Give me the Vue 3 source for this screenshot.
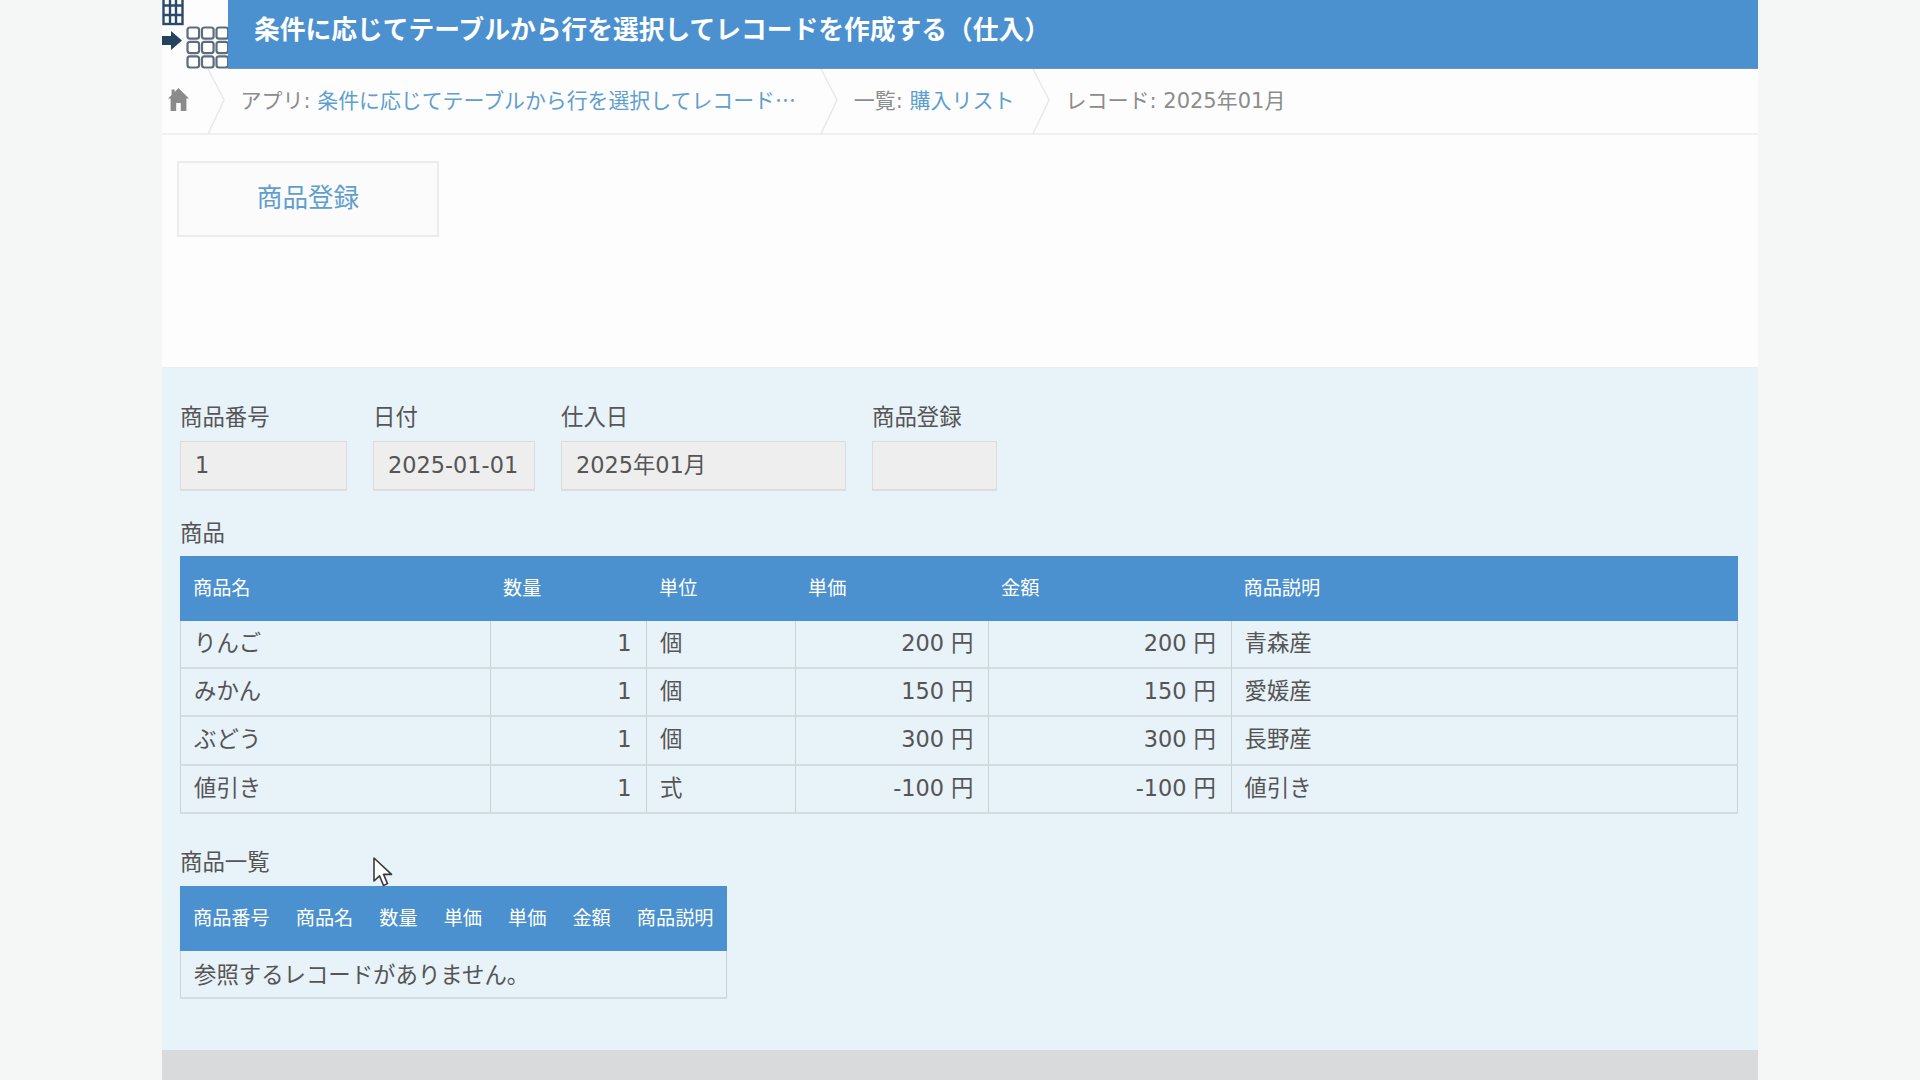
<script setup>
const appName = '条件に応じてテーブルから行を選択してレコードを作成する（仕入）'
const appCrumb = '条件に応じてテーブルから行を選択してレコード…'
const fields = [
  { label: '商品番号', value: '1', cls: 'w1' },
  { label: '日付', value: '2025-01-01', cls: 'w2' },
  { label: '仕入日', value: '2025年01月', cls: 'w3' },
  { label: '商品登録', value: '', cls: 'w4' },
]
const heads = ['商品名', '数量', '単位', '単価', '金額', '商品説明']
const rows = [
  ['りんご', '1', '個', '200 円', '200 円', '青森産'],
  ['みかん', '1', '個', '150 円', '150 円', '愛媛産'],
  ['ぶどう', '1', '個', '300 円', '300 円', '長野産'],
  ['値引き', '1', '式', '-100 円', '-100 円', '値引き'],
]
const subHeads = ['商品番号', '商品名', '数量', '単価', '単価', '金額', '商品説明']
const rightCols = [1, 3, 4]
</script>

<template>
  <div class="page">
    <div class="shell">
      <header class="head">
        <svg class="logo" width="66" height="69" viewBox="0 0 66 69" aria-hidden="true">
          <g fill="none" stroke="#2b4a68" stroke-width="2.4">
            <rect x="1.5" y="-8" width="19" height="32" fill="#fff" />
            <path d="M1.5 5.5H20.5M1.5 15H20.5M8 -8V24M14 -8V24" />
          </g>
          <path d="M0 36H9V31L20 40.5L9 50V45H0Z" fill="#25425f" />
          <g fill="#fff" stroke="#5c6d7e" stroke-width="2.2">
            <rect v-for="c in 9" :key="c" :x="25.5 + ((c - 1) % 3) * 14.5" :y="27.5 + Math.floor((c - 1) / 3) * 14.4" width="11.6" height="11.2" rx="2.5" />
          </g>
        </svg>
        <h1 class="title">{{ appName }}</h1>
      </header>

      <nav class="crumbs">
        <svg class="home" width="21" height="23" viewBox="0 0 21 23" aria-hidden="true">
          <path d="M10.5 0L21 10.5H18.4V23H12.8V15H8.2V23H2.6V10.5H0L3.6 6.9V1.5H6.6V3.9Z" fill="#8b8b8b" />
        </svg>
        <svg class="chev c1" width="18" height="65" viewBox="0 0 18 65" aria-hidden="true"><path d="M1 0L17 31L1 65" fill="none" stroke="#e6e8e9" stroke-width="1.4" /></svg>
        <span class="crumb app"><span class="dim">アプリ:&nbsp;</span><a class="link trunc">{{ appCrumb }}</a></span>
        <svg class="chev c2" width="18" height="65" viewBox="0 0 18 65" aria-hidden="true"><path d="M1 0L17 31L1 65" fill="none" stroke="#e6e8e9" stroke-width="1.4" /></svg>
        <span class="crumb list"><span class="dim">一覧:&nbsp;</span><a class="link">購入リスト</a></span>
        <svg class="chev c3" width="18" height="65" viewBox="0 0 18 65" aria-hidden="true"><path d="M1 0L17 31L1 65" fill="none" stroke="#e6e8e9" stroke-width="1.4" /></svg>
        <span class="crumb dim">レコード: 2025年01月</span>
      </nav>

      <section class="toolbar">
        <button class="action" type="button">商品登録</button>
      </section>

      <main class="record">
        <div class="fields">
          <div v-for="f in fields" :key="f.label" class="field" :class="f.cls">
            <div class="label">{{ f.label }}</div>
            <div class="box">{{ f.value }}</div>
          </div>
        </div>

        <div class="label sec1">商品</div>
        <table class="grid main-grid">
          <colgroup>
            <col class="c-a" /><col class="c-b" /><col class="c-c" /><col class="c-d" /><col class="c-e" /><col />
          </colgroup>
          <thead>
            <tr><th v-for="h in heads" :key="h">{{ h }}</th></tr>
          </thead>
          <tbody>
            <tr v-for="r in rows" :key="r[0]">
              <td v-for="(v, i) in r" :key="i" :class="{ right: rightCols.includes(i) }">{{ v }}</td>
            </tr>
          </tbody>
        </table>

        <div class="label sec2">商品一覧</div>
        <table class="grid sub-grid">
          <thead>
            <tr><th v-for="(h, i) in subHeads" :key="i">{{ h }}</th></tr>
          </thead>
          <tbody>
            <tr><td :colspan="subHeads.length">参照するレコードがありません。</td></tr>
          </tbody>
        </table>

        <svg class="cursor" width="20" height="30" viewBox="0 0 20 30" aria-hidden="true">
          <path d="M1 1V24L6.5 18.8L10.5 28.5L14.5 26.6L10.6 17.4H18.5Z" fill="#fff" stroke="#3a3a3a" stroke-width="1.6" stroke-linejoin="round" />
        </svg>
      </main>

      <footer class="foot"></footer>
    </div>
  </div>
</template>

<style>
html, body { margin: 0; background: #f5f6f6; }
</style>

<style scoped>
.page {
  height: 1080px;
  overflow: hidden;
  background: #f5f6f6;
  font-family: "DejaVu Sans", "Noto Sans CJK JP", sans-serif;
  color: #5a5a5a;
}
.shell {
  width: 1596px;
  height: 1080px;
  margin: 0 auto;
  display: flex;
  flex-direction: column;
  background: #fdfdfd;
}
.head {
  height: 69px;
  display: flex;
  flex: none;
}
.logo { flex: none; display: block; }
.title {
  flex: 1;
  margin: 0;
  padding: 0 0 13px 26px;
  height: 69px;
  box-sizing: border-box;
  display: flex;
  align-items: center;
  background: #4b90cf;
  border-bottom: 1px solid #6f93b4;
  color: #fff;
  font-family: "Noto Sans CJK JP", sans-serif;
  font-size: 25.75px;
  font-weight: 700;
}
.crumbs {
  height: 66px;
  flex: none;
  box-sizing: border-box;
  display: flex;
  align-items: center;
  padding-bottom: 4px;
  border-bottom: 2px solid #eff0f0;
  font-size: 21px;
  white-space: nowrap;
}
.home { margin-left: 6px; flex: none; }
.chev { flex: none; align-self: flex-start; }
.c1 { margin-left: 18px; }
.c2 { margin-left: 22px; }
.c3 { margin-left: 17.5px; }
.crumb { display: flex; margin-left: 15.5px; }
.dim { color: #8c8c8c; }
.link { color: #5f9fcf; }
.trunc {
  display: block;
  width: 481px;
  font-family: "Noto Sans CJK JP", sans-serif;
  font-size: 20.9px;
}
.toolbar {
  flex: none;
  height: 232px;
  box-sizing: border-box;
  padding: 26px 0 0 15px;
}
.action {
  display: block;
  width: 262px;
  height: 76px;
  padding: 0 0 8px;
  background: #fbfbfb;
  border: 2px solid #ebeced;
  color: #5f9fcf;
  font-family: "Noto Sans CJK JP", sans-serif;
  font-size: 25.6px;
}
.record {
  position: relative;
  flex: none;
  height: 683px;
  box-sizing: border-box;
  padding: 35px 20px 0 18px;
  background: #e8f2f9;
  border-top: 1px solid #eaeef0;
}
.fields { display: flex; gap: 26px; }
.w1 { width: 167px; }
.w2 { width: 162px; }
.w3 { width: 285px; }
.w4 { width: 125px; }
.label {
  height: 27px;
  line-height: 24px;
  font-size: 22.4px;
  font-family: "Noto Sans CJK JP", sans-serif;
  color: #555;
}
.box {
  margin-top: 11px;
  height: 50px;
  box-sizing: border-box;
  padding-left: 14px;
  line-height: 47px;
  background: #eeeeee;
  border: 2px solid #dcdcdc;
  border-width: 1px 1px 2px;
  font-size: 22.4px;
  color: #555;
}
.sec1 { margin-top: 28px; margin-bottom: 10px; }
.sec2 { margin-top: 34px; margin-bottom: 11px; }
.grid {
  border-collapse: separate;
  border-spacing: 0;
  white-space: nowrap;
}
.grid th {
  box-sizing: border-box;
  height: 65px;
  padding: 0 13px 3px;
  background: #4b90cf;
  color: #fff;
  font-size: 19.2px;
  font-weight: 400;
  font-family: "Noto Sans CJK JP", sans-serif;
  text-align: left;
}
.grid td {
  box-sizing: border-box;
  height: 48.2px;
  padding: 0 13px 2px;
  font-size: 22.4px;
  line-height: 30px;
  color: #555;
  border-left: 1px solid #ccd1d5;
  border-bottom: 2px solid #d6dbe0;
}
.grid td:last-child { border-right: 1px solid #ccd1d5; }
.grid td.right { text-align: right; padding-right: 14.5px; }
.main-grid { width: 1558px; table-layout: fixed; }
.c-a { width: 310px; }
.c-b { width: 156px; }
.c-c { width: 149px; }
.c-d { width: 193px; }
.c-e { width: 242.5px; }
.sub-grid td { font-family: "Noto Sans CJK JP", sans-serif; }
.cursor {
  position: absolute;
  left: 211px;
  top: 489px;
}
.foot {
  flex: 1;
  background: #d8dadb;
}
</style>
